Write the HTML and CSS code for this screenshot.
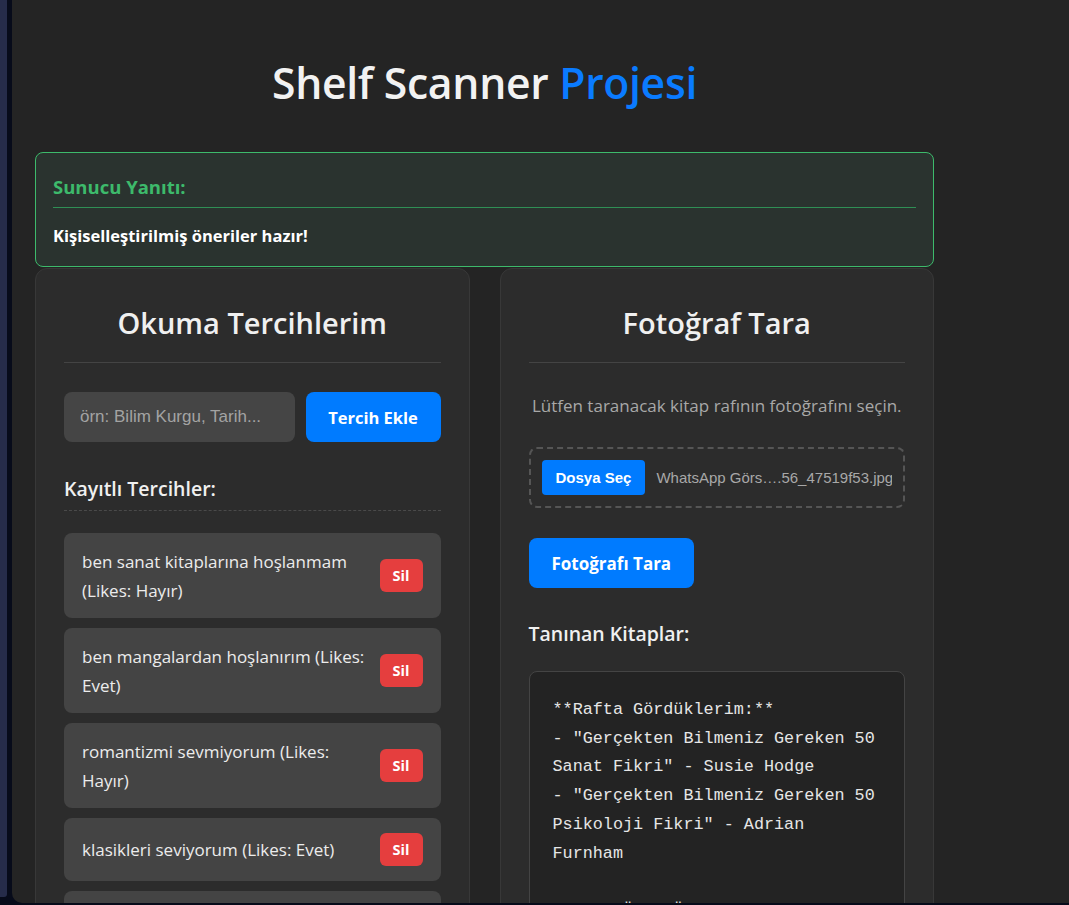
FILE: index.html
```html
<!DOCTYPE html>
<html lang="tr">
<head>
<meta charset="utf-8">
<title>Shelf Scanner Projesi</title>
<link rel="stylesheet" href="styles.css">
</head>
<body>
<div class="frame">
  <div class="side-strip"></div>
  <main class="app">
    <div class="container">
      <h1 class="title">Shelf Scanner <span class="accent">Projesi</span></h1>

      <section class="alert">
        <h3 class="alert-title">Sunucu Yanıtı:</h3>
        <p class="alert-msg">Kişiselleştirilmiş öneriler hazır!</p>
      </section>

      <div class="columns">
        <section class="card">
          <h2 class="card-title">Okuma Tercihlerim</h2>
          <div class="add-row">
            <input class="text-input" type="text" placeholder="örn: Bilim Kurgu, Tarih...">
            <button class="btn btn-primary btn-add">Tercih Ekle</button>
          </div>
          <h3 class="sub-title sub-dashed">Kayıtlı Tercihler:</h3>
          <ul class="pref-list">
            <li class="pref-item"><span class="pref-text">ben sanat kitaplarına hoşlanmam (Likes: Hayır)</span><button class="btn-del">Sil</button></li>
            <li class="pref-item"><span class="pref-text">ben mangalardan hoşlanırım (Likes: Evet)</span><button class="btn-del">Sil</button></li>
            <li class="pref-item"><span class="pref-text">romantizmi sevmiyorum (Likes: Hayır)</span><button class="btn-del">Sil</button></li>
            <li class="pref-item"><span class="pref-text">klasikleri seviyorum (Likes: Evet)</span><button class="btn-del">Sil</button></li>
            <li class="pref-item"><span class="pref-text">bilim kurgu severim (Likes: Evet)</span><button class="btn-del">Sil</button></li>
          </ul>
        </section>

        <section class="card">
          <h2 class="card-title">Fotoğraf Tara</h2>
          <p class="hint">Lütfen taranacak kitap rafının fotoğrafını seçin.</p>
          <div class="file-box">
            <span class="file-btn">Dosya Seç</span>
            <span class="file-name">WhatsApp Görs….56_47519f53.jpg</span>
          </div>
          <button class="btn btn-primary btn-scan">Fotoğrafı Tara</button>
          <h3 class="sub-title sub-books">Tanınan Kitaplar:</h3>
          <pre class="result">**Rafta Gördüklerim:**
- "Gerçekten Bilmeniz Gereken 50 Sanat Fikri" - Susie Hodge
- "Gerçekten Bilmeniz Gereken 50 Psikoloji Fikri" - Adrian Furnham

**Size Özel Öneriler:**
- "Sanatın Öyküsü" - E. H. Gombrich</pre>
        </section>
      </div>
    </div>
  </main>
</div>
</body>
</html>
```

FILE: styles.css
```css
* { box-sizing: border-box; }

html, body {
  margin: 0;
  height: 100%;
  overflow: hidden;
}

body {
  background: #070b1a;
  font-family: "Open Sans", "Noto Sans", sans-serif;
  color: #ececec;
}

.frame {
  display: flex;
  height: 903px;
}

.side-strip {
  width: 7px;
  height: 897px;
  background: #262c4a;
  border-bottom-right-radius: 3px;
  margin-right: 5px;
  flex: none;
}

.app {
  flex: 1;
  background: #242424;
  border-bottom-left-radius: 10px;
  padding: 0 23px;
  overflow: hidden;
}

.container {
  width: 899px;
}

.title {
  margin: 0;
  padding-top: 53px;
  height: 152px;
  text-align: center;
  font-size: 42.7px;
  font-weight: 600;
  line-height: 60px;
  color: #f2f2f2;
  letter-spacing: -0.3px;
}

.accent { color: #0a7bff; }

.alert {
  background: #2a332f;
  border: 1px solid #3dba6b;
  border-radius: 8px;
  padding: 20px 17px 17px;
}

.alert-title {
  margin: 0;
  font-size: 18.5px;
  line-height: 27px;
  font-weight: 700;
  color: #3dba6b;
  padding-bottom: 7px;
  border-bottom: 1px solid #2f8f55;
}

.alert-msg {
  margin: 14px 0 0;
  font-size: 16.5px;
  line-height: 27px;
  font-weight: 700;
  color: #ffffff;
}

.columns {
  display: grid;
  grid-template-columns: minmax(0, 1fr) minmax(0, 1fr);
  gap: 30px;
  margin-top: 1px;
}

.card {
  min-width: 0;
  background: #2c2c2c;
  border: 1px solid #383838;
  border-radius: 12px;
  padding: 28px 28px 28px;
  min-height: 700px;
}

.card-title {
  margin: 0 0 29px;
  padding: 8px 0 21px;
  font-size: 29px;
  line-height: 36px;
  font-weight: 600;
  text-align: center;
  color: #f0f0f0;
  border-bottom: 1px solid #444;
}

.add-row {
  display: flex;
  gap: 11px;
}

.text-input {
  flex: 1;
  min-width: 0;
  width: 0;
  height: 50px;
  border: none;
  border-radius: 8px;
  background: #454545;
  padding: 0 16px;
  font-family: "Liberation Sans", Arial, sans-serif;
  font-size: 17px;
  color: #e0e0e0;
  outline: none;
}

.text-input::placeholder { color: #a3a3a3; }

.btn {
  border: none;
  cursor: pointer;
  font-family: "Open Sans", "Noto Sans", sans-serif;
}

.btn-primary {
  background: #007bff;
  color: #fff;
  border-radius: 8px;
  height: 50px;
  padding: 0 23px;
  font-size: 16.5px;
  font-weight: 700;
}

.btn-add {
  flex: none;
  width: 135px;
  padding: 0;
}

.sub-title {
  margin: 0;
  font-size: 19.5px;
  line-height: 30px;
  font-weight: 600;
  color: #f0f0f0;
}

.sub-dashed {
  margin-top: 32px;
  padding-bottom: 6px;
  border-bottom: 1px dashed #4a4a4a;
}

.pref-list {
  list-style: none;
  margin: 22px 0 0;
  padding: 0;
  display: flex;
  flex-direction: column;
  gap: 10px;
}

.pref-item {
  display: flex;
  align-items: center;
  gap: 15px;
  background: #444444;
  border-radius: 8px;
  padding: 13.5px 18px;
  font-size: 17px;
  line-height: 29px;
  color: #ececec;
}

.pref-text { flex: 1; min-width: 0; }

.btn-del {
  flex: none;
  border: none;
  background: #e53e3e;
  color: #fff;
  font-family: "Open Sans", "Noto Sans", sans-serif;
  font-weight: 700;
  font-size: 14.5px;
  width: 43px;
  height: 33px;
  margin: 1.5px 0;
  border-radius: 6px;
  padding: 0;
}

.hint {
  margin: 3px 0 0;
  text-align: center;
  color: #a8a8a8;
  font-size: 17px;
  line-height: 27px;
}

.file-box {
  margin-top: 28px;
  border: 2px dashed #555;
  border-radius: 8px;
  padding: 11px;
  display: flex;
  align-items: center;
  gap: 11px;
}

.file-btn {
  flex: none;
  white-space: nowrap;
  background: #007bff;
  color: #fff;
  border-radius: 4px;
  height: 35px;
  padding: 0 14px;
  display: flex;
  align-items: center;
  font-family: "Liberation Sans", Arial, sans-serif;
  font-weight: 700;
  font-size: 15px;
}

.file-name {
  white-space: nowrap;
  overflow: hidden;
  font-family: "Liberation Sans", Arial, sans-serif;
  font-size: 15px;
  color: #a8a8a8;
}

.btn-scan {
  margin-top: 30px;
  font-size: 17px;
}

.sub-books {
  margin-top: 31px;
}

.result {
  margin: 22px 0 0;
  background: #232323;
  border: 1px solid #444;
  border-radius: 8px;
  padding: 24px 23px 22px;
  font-family: "Liberation Mono", "Courier New", monospace;
  font-size: 16.8px;
  line-height: 28.7px;
  color: #e6e6e6;
  white-space: pre-wrap;
  word-wrap: break-word;
}
```
